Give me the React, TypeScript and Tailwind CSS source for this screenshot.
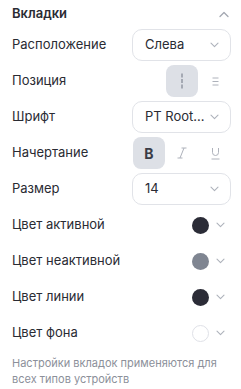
import React from "react";

const ChevronDown = ({ className = "" }: { className?: string }) => (
  <svg width="9" height="6" viewBox="0 0 9 6" fill="none" className={className}>
    <path d="M1 1.2l3.5 3.4 3.5-3.4" stroke="#aeb2bb" strokeWidth="1.1" strokeLinecap="round" strokeLinejoin="round" />
  </svg>
);

const ChevronUp = ({ className = "" }: { className?: string }) => (
  <svg width="10" height="7" viewBox="0 0 10 7" fill="none" className={className}>
    <path d="M1 5.5l4-4 4 4" stroke="#a4a8b2" strokeWidth="1.3" strokeLinecap="round" strokeLinejoin="round" />
  </svg>
);

const Select = ({ value }: { value: string }) => (
  <div className="flex h-8 w-[99px] items-center justify-between rounded-[10px] border border-[#e1e3e8] bg-white pl-[12px] pr-[11px]">
    <span className="text-[13px] text-[#2a2b33]">{value}</span>
    <ChevronDown />
  </div>
);

const Row = ({ label, children }: { label: string; children: React.ReactNode }) => (
  <div className="flex h-9 items-center justify-between">
    <span className="text-[13px] text-[#2a2b33]">{label}</span>
    {children}
  </div>
);

const ColorPick = ({ color, border = false }: { color: string; border?: boolean }) => (
  <div className="flex items-center gap-[7px] pr-[6px]">
    <span
      className={`block h-[17px] w-[17px] rounded-full ${border ? "border border-[#dfe1e7]" : ""}`}
      style={{ backgroundColor: color }}
    />
    <ChevronDown />
  </div>
);

const App = () => {
  const colors = [
    { label: "Цвет активной", color: "#2b2c37" },
    { label: "Цвет неактивной", color: "#7f8591" },
    { label: "Цвет линии", color: "#2b2c37" },
    { label: "Цвет фона", color: "#ffffff", border: true },
  ];

  return (
    <div
      className="h-[389px] w-[241px] bg-white pl-3 pr-[10px]"
      style={{ fontFamily: "Inter, 'Noto Sans', sans-serif" }}
    >
      <div className="flex h-[27px] items-center justify-between pt-px">
        <span className="text-[13px] font-semibold text-[#2a2b33]">Вкладки</span>
        <ChevronUp className="mr-[2px]" />
      </div>

      <Row label="Расположение">
        <Select value="Слева" />
      </Row>

      <Row label="Позиция">
        <div className="flex gap-px">
          <div className="flex h-8 w-8 items-center justify-center rounded-[8px] bg-[#dde0e6]">
            <svg width="4" height="16" viewBox="0 0 4 16">
              <path d="M2 0.5v4M2 6v4M2 11.5v4" stroke="#6d7280" strokeWidth="1" />
            </svg>
          </div>
          <div className="flex h-8 w-8 items-center justify-center">
            <svg width="7" height="9" viewBox="0 0 7 9">
              <path d="M0.5 1h6M0.5 4.5h6M0.5 8h6" stroke="#aeb2bb" strokeWidth="1" />
            </svg>
          </div>
        </div>
      </Row>

      <Row label="Шрифт">
        <Select value="PT Root..." />
      </Row>

      <Row label="Начертание">
        <div className="flex gap-px">
          <div className="flex h-8 w-8 items-center justify-center rounded-[8px] bg-[#dde0e6]">
            <span className="text-[14px] font-bold text-[#3a3c46]">B</span>
          </div>
          <div className="flex h-8 w-8 items-center justify-center">
            <svg width="10" height="12" viewBox="0 0 10 12" fill="none">
              <path d="M4.5 1h5M0.5 11h5M7 1L3 11" stroke="#aeb2bb" strokeWidth="1" />
            </svg>
          </div>
          <div className="flex h-8 w-8 items-center justify-center">
            <svg width="9" height="13" viewBox="0 0 9 13" fill="none">
              <path d="M1.5 1v4.5a3 3 0 006 0V1M0.5 12h8" stroke="#aeb2bb" strokeWidth="1" />
            </svg>
          </div>
        </div>
      </Row>

      <Row label="Размер">
        <Select value="14" />
      </Row>

      {colors.map((c) => (
        <Row key={c.label} label={c.label}>
          <ColorPick color={c.color} border={c.border} />
        </Row>
      ))}

      <p className="mt-1 text-[11px] leading-4 text-[#8c909a]">
        Настройки вкладок применяются для всех типов устройств
      </p>
    </div>
  );
};

export default App;
